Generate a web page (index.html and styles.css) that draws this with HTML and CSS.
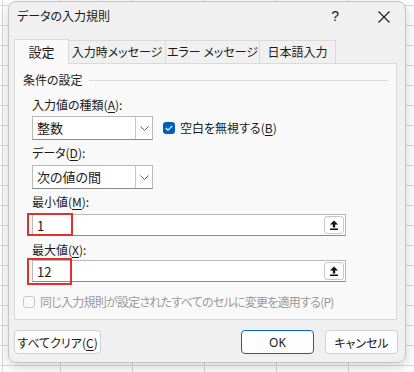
FILE: index.html
```html
<!DOCTYPE html>
<html lang="ja">
<head>
    <meta charset="UTF-8">
    <title>データの入力規則</title>
    <link rel="stylesheet" href="styles.css">
</head>
<body>

<div class="dialog">
    <div class="titlebar">
        <span class="title">データの入力規則</span>
        <span class="help">?</span>
        <svg class="close" width="12" height="12" viewBox="0 0 12 12">
            <path d="M0.5 0.5 L11.5 11.5 M11.5 0.5 L0.5 11.5" stroke="#1a1a1a" stroke-width="1.1" fill="none"/>
        </svg>
    </div>

    <div class="tabs">
        <div class="tab active tab-1">設定</div>
        <div class="tab tab-2">入力時メッセージ</div>
        <div class="tab tab-3">エラー メッセージ</div>
        <div class="tab tab-4">日本語入力</div>
    </div>

    <div class="panel">
        <div class="group-title">
            <span>条件の設定</span>
            <span class="group-line"></span>
        </div>

        <div class="group">
            <div class="label first">入力値の種類(<u>A</u>):</div>
            <div class="row">
                <div class="select">
                    <span class="select-text">整数</span>
                    <span class="select-btn">
                        <svg width="9" height="5" viewBox="0 0 9 5"><path d="M0.5 0.5 L4.5 4.5 L8.5 0.5" stroke="#606060" fill="none"/></svg>
                    </span>
                </div>
                <span class="check checked">
                    <svg width="8" height="6" viewBox="0 0 8 6"><path d="M0.7 3 L3 5.2 L7.3 0.8" stroke="#fff" stroke-width="1.1" fill="none"/></svg>
                </span>
                <span class="check-label">空白を無視する(<u>B</u>)</span>
            </div>

            <div class="label">データ(<u>D</u>):</div>
            <div class="select">
                <span class="select-text">次の値の間</span>
                <span class="select-btn">
                    <svg width="9" height="5" viewBox="0 0 9 5"><path d="M0.5 0.5 L4.5 4.5 L8.5 0.5" stroke="#606060" fill="none"/></svg>
                </span>
            </div>

            <div class="label">最小値(<u>M</u>):</div>
            <div class="input">
                <span class="input-text">1</span>
                <span class="ref-btn">
                    <svg width="10" height="10" viewBox="0 0 10 10"><path d="M5 0.5 L9 4.5 H6.2 V7.5 H3.8 V4.5 H1 Z" fill="#111"/><rect x="1" y="8.5" width="8" height="1.5" fill="#111"/></svg>
                </span>
                <span class="mark mark-1"></span>
            </div>

            <div class="label second">最大値(<u>X</u>):</div>
            <div class="input">
                <span class="input-text">12</span>
                <span class="ref-btn">
                    <svg width="10" height="10" viewBox="0 0 10 10"><path d="M5 0.5 L9 4.5 H6.2 V7.5 H3.8 V4.5 H1 Z" fill="#111"/><rect x="1" y="8.5" width="8" height="1.5" fill="#111"/></svg>
                </span>
                <span class="mark mark-2"></span>
            </div>
        </div>

        <div class="apply-row">
            <span class="check disabled"></span>
            <span class="apply-label">同じ入力規則が設定されたすべてのセルに変更を適用する(P)</span>
        </div>
    </div>

    <div class="buttons">
        <button class="btn btn-clear">すべてクリア(<u>C</u>)</button>
        <span class="spacer"></span>
        <button class="btn btn-ok">OK</button>
        <button class="btn btn-cancel">キャンセル</button>
    </div>
</div>

</body>
</html>
```

FILE: styles.css
```css
body {
    margin: 0;
    padding: 1px 0 0 8px;
    height: 372px;
    box-sizing: border-box;
    overflow: hidden;
    font-family: "Noto Sans CJK JP", "Noto Sans", sans-serif;
    font-size: 12px;
    font-feature-settings: "palt";
    color: #1a1a1a;
    background-color: #ffffff;
    background-image:
        linear-gradient(to right, #d8d8d8 1px, transparent 1px),
        linear-gradient(to bottom, #dcdcdc 1px, transparent 1px),
        linear-gradient(to right, transparent 2px, #d8d8d8 2px, #d8d8d8 3px, transparent 3px);
    background-size: 72px 100%, 100% 20px, 100% 100%;
    background-position: 60px 0, 0 5px, 0 0;
    background-repeat: repeat-x, repeat-y, no-repeat;
}
u {
    text-decoration-thickness: 1px;
    text-underline-offset: 2px;
}
.dialog {
    width: 398px;
    height: 362px;
    box-sizing: border-box;
    border: 1px solid #c4c4c4;
    border-radius: 8px;
    background-color: #f0f0f0;
    box-shadow: 0 4px 14px rgba(0, 0, 0, 0.18);
    display: flex;
    flex-direction: column;
}
.titlebar {
    height: 38px;
    box-sizing: border-box;
    padding: 5px 0 0 8px;
    display: flex;
    align-items: flex-start;
}
.title {
    line-height: 18px;
    flex: 1;
}
.help {
    font-family: "Liberation Sans", sans-serif;
    font-size: 14px;
    line-height: 18px;
    margin-right: 39px;
}
.close {
    margin: 4px 15px 0 0;
}
.tabs {
    display: flex;
    margin-left: 5px;
    height: 23px;
    position: relative;
    z-index: 1;
}
.tab {
    box-sizing: border-box;
    height: 23px;
    border: 1px solid #dadada;
    border-bottom: none;
    border-left: none;
    background-color: #f0f0f0;
    text-align: center;
    line-height: 22px;
}
.tab-1 { width: 55px; }
.tab-2 { width: 97px; }
.tab-3 { width: 94px; }
.tab-4 { width: 76px; }
.tab.active {
    border-left: 1px solid #dadada;
    background-color: #f9f9f9;
    height: 25px;
    margin-top: -1px;
    line-height: 24px;
    font-size: 13px;
}
.panel {
    margin: 0 8px 0 5px;
    height: 257px;
    box-sizing: border-box;
    border: 1px solid #dadada;
    background-color: #f9f9f9;
    padding: 8px 8px 0 8px;
}
.group-title {
    display: flex;
    align-items: center;
    line-height: 16px;
}
.group-line {
    flex: 1;
    height: 1px;
    background-color: #dcdcdc;
    margin-left: 6px;
}
.group {
    margin-left: 9px;
}
.label {
    line-height: 16px;
    margin: 5px 0 4px;
}
.label.first {
    margin: 9px 0 3px;
}
.label.second {
    margin: 6px 0 2px;
}
.row {
    display: flex;
    align-items: center;
}
.select {
    width: 121px;
    height: 24px;
    box-sizing: border-box;
    border: 1px solid #b8b8b8;
    border-bottom-color: #8a8a8a;
    background-color: #ffffff;
    display: flex;
    align-items: stretch;
}
.select-text {
    flex: 1;
    padding-left: 4px;
    line-height: 22px;
    font-size: 13px;
}
.select-btn {
    width: 16px;
    border-left: 1px solid #c8c8c8;
    display: flex;
    align-items: center;
    justify-content: center;
}
.check {
    width: 12px;
    height: 12px;
    box-sizing: border-box;
    border-radius: 3px;
    display: inline-flex;
    align-items: center;
    justify-content: center;
}
.check.checked {
    background-color: #005fb8;
    margin-left: 10px;
}
.check-label {
    margin-left: 5px;
    line-height: 16px;
}
.input {
    position: relative;
    width: 314px;
    height: 22px;
    box-sizing: border-box;
    border: 1px solid #b8b8b8;
    border-bottom-color: #8a8a8a;
    background-color: #ffffff;
    display: flex;
    align-items: center;
}
.input-text {
    flex: 1;
    padding-left: 4px;
    font-size: 13px;
}
.ref-btn {
    width: 20px;
    height: 18px;
    box-sizing: border-box;
    margin-right: 1px;
    border: 1px solid #c8c8c8;
    border-radius: 3px;
    background-color: #ffffff;
    display: flex;
    align-items: center;
    justify-content: center;
}
.mark {
    position: absolute;
    border: 2px solid #e3302a;
    box-sizing: border-box;
}
.mark-1 {
    left: -6px;
    top: -2px;
    width: 46px;
    height: 23px;
}
.mark-2 {
    left: -6px;
    top: -3px;
    width: 45px;
    height: 27px;
}
.apply-row {
    display: flex;
    align-items: center;
    margin-top: 12px;
    line-height: 16px;
    color: #9a9a9a;
}
.check.disabled {
    border: 1px solid #c8c8c8;
}
.apply-label {
    margin-left: 5px;
    letter-spacing: -0.75px;
}
.buttons {
    display: flex;
    margin: 10px 7px 0 5px;
    gap: 11px;
}
.spacer {
    flex: 1;
}
.btn {
    height: 24px;
    box-sizing: border-box;
    border: 1px solid #d0d0d0;
    border-radius: 4px;
    background-color: #fdfdfd;
    font-family: "Noto Sans CJK JP", "Noto Sans", sans-serif;
    font-size: 12px;
    font-feature-settings: "palt";
    color: #1a1a1a;
    padding: 0;
}
.btn-clear { width: 87px; }
.btn-ok {
    width: 73px;
    border-color: #0067c0;
    font-family: "Noto Sans", sans-serif;
}
.btn-cancel { width: 73px; }
```
